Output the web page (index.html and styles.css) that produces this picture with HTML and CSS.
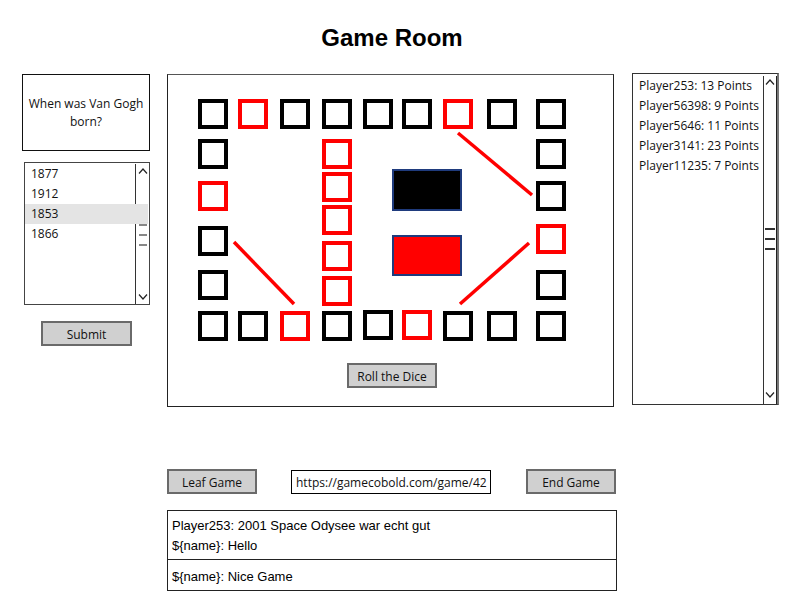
FILE: index.html
```html
<!DOCTYPE html>
<html>
<head>
<meta charset="utf-8">
<title>Game Room</title>
<link rel="stylesheet" href="styles.css">
</head>
<body>
<div class="page">
  <h1 class="title">Game Room</h1>
  <div class="main">
    <div class="left">
      <div class="question">When was Van Gogh<br>born?</div>
      <div class="listbox answers">
        <div class="item">1877</div>
        <div class="item">1912</div>
        <div class="item selected">1853</div>
        <div class="item">1866</div>
        <div class="scrollbar">
          <svg class="arrow" width="10" height="6" viewBox="0 0 10 6"><polyline points="1,5.5 5,1 9,5.5" fill="none" stroke="#222" stroke-width="1.2"/></svg>
          <div class="grip"><span></span><span></span><span></span></div>
          <svg class="arrow" width="10" height="6" viewBox="0 0 10 6"><polyline points="1,0.5 5,5 9,0.5" fill="none" stroke="#222" stroke-width="1.2"/></svg>
        </div>
      </div>
      <button class="btn submit">Submit</button>
    </div>
    <div class="board">
      <svg class="board-art" width="445" height="280" viewBox="0 0 445 280">
        <g fill="none" stroke-width="4">
          <g stroke="#000">
            <rect x="32" y="26" width="26" height="26"/>
            <rect x="114" y="26" width="26" height="26"/>
            <rect x="156" y="26" width="26" height="26"/>
            <rect x="197" y="26" width="26" height="26"/>
            <rect x="236" y="26" width="26" height="26"/>
            <rect x="321" y="26" width="26" height="26"/>
            <rect x="370" y="26" width="26" height="26"/>
            <rect x="32" y="66" width="26" height="26"/>
            <rect x="32" y="153" width="26" height="26"/>
            <rect x="32" y="197" width="26" height="26"/>
            <rect x="370" y="66" width="26" height="26"/>
            <rect x="370" y="108" width="26" height="26"/>
            <rect x="370" y="197" width="26" height="26"/>
            <rect x="32" y="238" width="26" height="26"/>
            <rect x="72" y="238" width="26" height="26"/>
            <rect x="156" y="238" width="26" height="26"/>
            <rect x="197" y="237" width="26" height="26"/>
            <rect x="277" y="238" width="26" height="26"/>
            <rect x="321" y="238" width="26" height="26"/>
            <rect x="370" y="238" width="26" height="26"/>
          </g>
          <g stroke="#ff0000">
            <rect x="72" y="26" width="26" height="26"/>
            <rect x="277" y="26" width="26" height="26"/>
            <rect x="32" y="108" width="26" height="26"/>
            <rect x="370" y="151" width="26" height="26"/>
            <rect x="114" y="238" width="26" height="26"/>
            <rect x="236" y="237" width="26" height="26"/>
            <rect x="156" y="66" width="26" height="26"/>
            <rect x="156" y="99" width="26" height="26"/>
            <rect x="156" y="132" width="26" height="26"/>
            <rect x="156" y="168" width="26" height="26"/>
            <rect x="156" y="203" width="26" height="26"/>
          </g>
        </g>
        <rect x="225" y="95" width="68" height="40" fill="#000" stroke="#1f3b7d" stroke-width="2"/>
        <rect x="225" y="161" width="68" height="39" fill="#ff0000" stroke="#1f3b7d" stroke-width="2"/>
        <g stroke="#ff0000" stroke-width="3.5" stroke-linecap="butt">
          <line x1="290" y1="58" x2="364" y2="120"/>
          <line x1="361" y1="168" x2="292" y2="229"/>
          <line x1="66" y1="167" x2="126" y2="229"/>
        </g>
      </svg>
      <button class="btn roll">Roll the Dice</button>
    </div>
    <div class="listbox players">
      <div class="item">Player253: 13 Points</div>
      <div class="item">Player56398: 9 Points</div>
      <div class="item">Player5646: 11 Points</div>
      <div class="item">Player3141: 23 Points</div>
      <div class="item">Player11235: 7 Points</div>
      <div class="scrollbar">
        <svg class="arrow" width="10" height="6" viewBox="0 0 10 6"><polyline points="1,5.5 5,1 9,5.5" fill="none" stroke="#222" stroke-width="1.2"/></svg>
        <div class="grip dark"><span></span><span></span><span></span></div>
        <svg class="arrow" width="10" height="6" viewBox="0 0 10 6"><polyline points="1,0.5 5,5 9,0.5" fill="none" stroke="#222" stroke-width="1.2"/></svg>
      </div>
    </div>
  </div>
  <div class="actions">
    <button class="btn leave">Leaf Game</button>
    <div class="url">https://gamecobold.com/game/42</div>
    <button class="btn end">End Game</button>
  </div>
  <div class="chat">
    <div class="messages">
      <div class="msg">Player253: 2001 Space Odysee war echt gut</div>
      <div class="msg">${name}: Hello</div>
    </div>
    <div class="compose">${name}: Nice Game</div>
  </div>
</div>
</body>
</html>
```

FILE: styles.css
```css
* { box-sizing: border-box; }
html, body { margin: 0; padding: 0; background: #fff; }
body {
  width: 800px;
  height: 600px;
  overflow: hidden;
  font-family: "Open Sans", "DejaVu Sans", sans-serif;
  font-size: 12px;
  color: #111;
}
.page { width: 800px; }

.title {
  margin: 0;
  padding: 24px 16px 0 0;
  height: 73px;
  text-align: center;
  font-family: "Liberation Sans", Arial, sans-serif;
  font-weight: bold;
  font-size: 24px;
  line-height: 28px;
  color: #000;
}

.main {
  display: flex;
  align-items: flex-start;
  padding-left: 22px;
}

.left {
  width: 128px;
  margin-top: 1px;
  display: flex;
  flex-direction: column;
}

.question {
  width: 128px;
  height: 77px;
  border: 1px solid #111;
  display: flex;
  align-items: center;
  justify-content: center;
  text-align: center;
  line-height: 18px;
  padding-top: 1px;
}

.listbox {
  display: grid;
  grid-template-columns: 1fr 14px;
  grid-template-rows: repeat(5, 20px) 1fr;
  border: 1px solid #444;
  background: #fff;
}
.listbox .item {
  grid-column: 1;
  padding-left: 6px;
  line-height: 20px;
  white-space: nowrap;
}
.listbox .item.selected {
  grid-column: 1 / -1;
  grid-row: 3;
  background: #e4e4e4;
  position: relative;
  z-index: 1;
  margin-right: 1px;
}
.scrollbar {
  grid-column: 2;
  grid-row: 1 / -1;
  border-left: 1px solid #333;
  display: flex;
  flex-direction: column;
  align-items: center;
  justify-content: space-between;
  padding: 4px 0 4px;
}
.arrow { display: block; }
.grip {
  display: flex;
  flex-direction: column;
  align-items: center;
  gap: 8px;
  margin-top: 2px;
}
.grip span {
  display: block;
  width: 8px;
  height: 2px;
  background: #888;
}
.grip.dark span { width: 10px; height: 2px; background: #333; }

.answers {
  width: 126px;
  height: 143px;
  margin-top: 11px;
  margin-left: 2px;
  padding-top: 1px;
}

.btn {
  display: block;
  width: 90px;
  height: 25px;
  padding: 0;
  border: 2px solid #6a6a6a;
  background: #d0d0d0;
  font-family: "Open Sans", "DejaVu Sans", sans-serif;
  font-size: 12px;
  color: #111;
  line-height: 24px;
  text-align: center;
}

.submit {
  width: 91px;
  margin-top: 16px;
  margin-left: 19px;
}

.board {
  width: 447px;
  height: 333px;
  margin-left: 17px;
  margin-top: 1px;
  border: 1px solid #222;
  border-top-color: #555;
  display: flex;
  flex-direction: column;
  align-items: center;
}
.board-art { display: block; align-self: flex-start; }
.roll {
  margin-top: 8px;
  margin-left: 3px;
}

.players {
  width: 147px;
  height: 332px;
  margin-left: 18px;
  padding-top: 2px;
  border-color: #333;
  border-right: 2px solid #777;
}
.players .scrollbar { border-right: 1px solid #222; padding: 3px 0 6px; }
.players .grip { gap: 8px; margin-top: 0; }

.actions {
  display: flex;
  align-items: flex-start;
  padding-left: 167px;
  margin-top: 62px;
}
.url {
  width: 200px;
  height: 24px;
  margin-left: 34px;
  margin-top: 1px;
  border: 1px solid #000;
  padding-left: 4px;
  line-height: 24px;
  white-space: nowrap;
  overflow: hidden;
}
.end { margin-left: 35px; }

.chat {
  width: 450px;
  height: 81px;
  margin-left: 167px;
  margin-top: 16px;
  border: 1px solid #222;
  font-family: "Liberation Sans", Arial, sans-serif;
  font-size: 13px;
  color: #000;
  display: flex;
  flex-direction: column;
}
.messages {
  height: 49px;
  padding: 5px 0 0 4px;
  border-bottom: 1px solid #222;
}
.msg { line-height: 20px; }
.compose {
  padding: 7px 0 0 4px;
  line-height: 20px;
}
```
